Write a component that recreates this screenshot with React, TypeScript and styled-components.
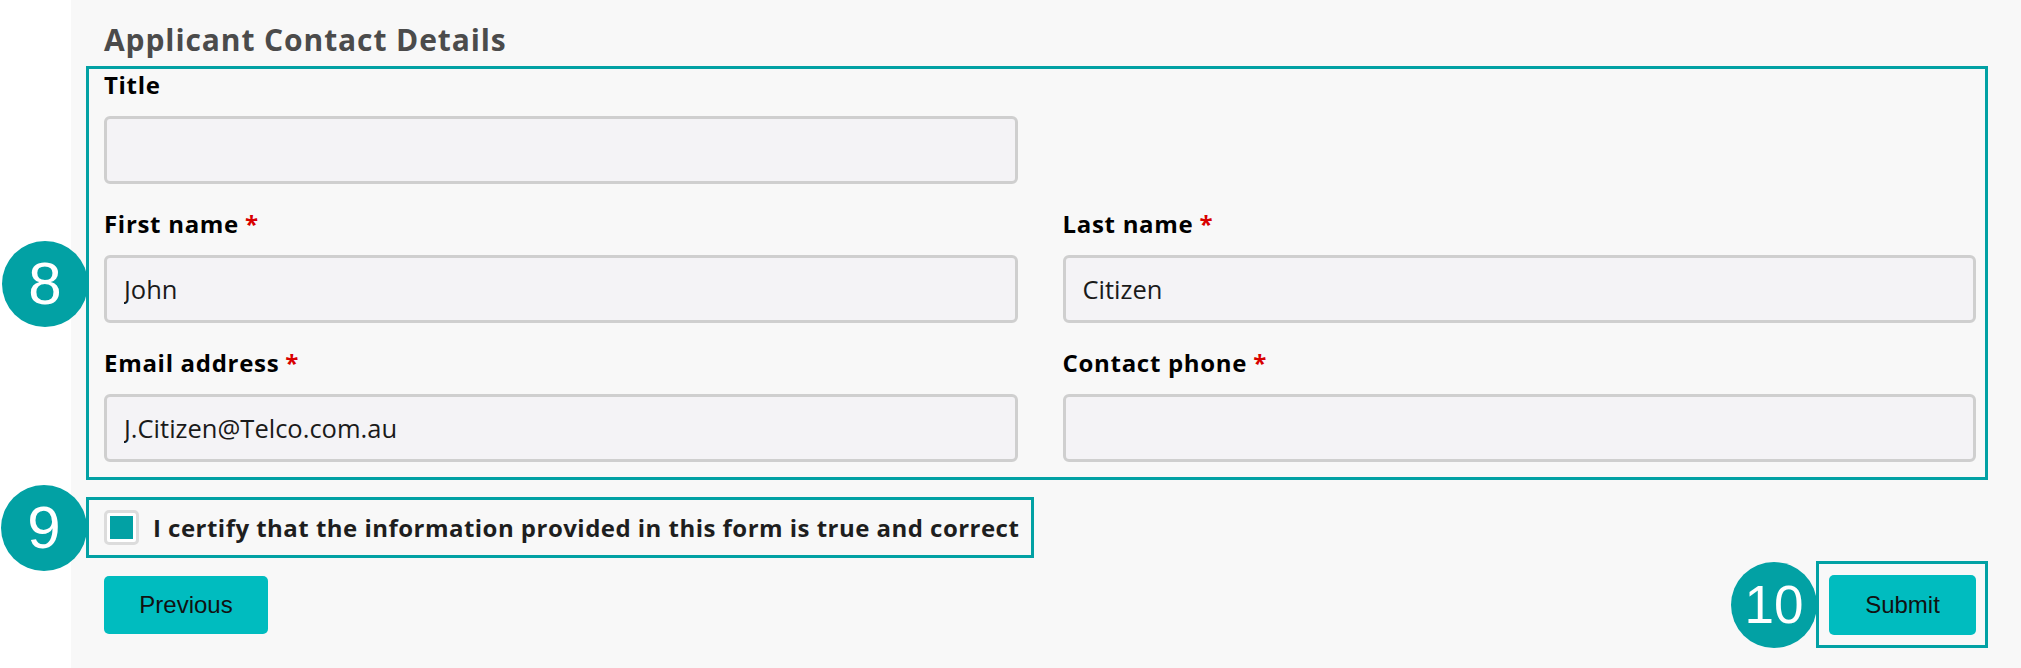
import * as React from 'react';
import styled, { createGlobalStyle } from 'styled-components';

const GlobalStyle = createGlobalStyle`
  html, body {
    margin: 0;
    padding: 0;
    background: #ffffff;
  }
  body {
    font-family: 'Open Sans', 'Liberation Sans', sans-serif;
  }
  * {
    box-sizing: border-box;
  }
`;

const teal = '#02a1a4';

const Page = styled.div`
  display: flex;
  min-height: 100vh;
`;

const Gutter = styled.div`
  width: 71px;
  flex-shrink: 0;
  background: #ffffff;
`;

const Panel = styled.main`
  flex: 1;
  display: flex;
  flex-direction: column;
  align-items: stretch;
  background: #f8f8f8;
  padding: 0 33px 0 15px;
`;

const Heading = styled.h2`
  margin: 0 0 8px 18px;
  padding-top: 22px;
  font-family: 'Open Sans', sans-serif;
  font-weight: 700;
  font-size: 30px;
  line-height: 36px;
  color: #4b4b4b;
  letter-spacing: 0.9px;
`;

// teal outline used by the numbered callouts
const Callout = styled.div`
  position: relative;
  border: 3px solid ${teal};
`;

const FieldsBox = styled(Callout)`
  display: grid;
  grid-template-columns: 1fr 1fr;
  column-gap: 45px;
  row-gap: 24px;
  padding: 0 9px 15px 15px;
`;

const Field = styled.div<{ $full?: boolean }>`
  display: flex;
  flex-direction: column;
  grid-column: ${p => (p.$full ? '1 / 2' : 'auto')};
`;

const Label = styled.label`
  display: block;
  height: 29px;
  margin-bottom: 18px;
  padding-top: 1px;
  font-family: 'Open Sans', sans-serif;
  font-weight: 700;
  font-size: 24px;
  line-height: 29px;
  letter-spacing: 0.7px;
  color: #000;
  white-space: nowrap;
`;

const Req = styled.span`
  color: #d80000;
  margin-left: -1px;
`;

const Input = styled.input`
  height: 68px;
  width: 100%;
  border: 3px solid #cfcfcf;
  border-radius: 6px;
  background: #f4f3f6;
  padding: 0 17px;
  font-family: 'Open Sans', sans-serif;
  font-size: 25.5px;
  color: #1a1a1a;
  outline: none;
`;

const CertifyBox = styled(Callout)`
  align-self: flex-start;
  display: inline-flex;
  align-items: center;
  gap: 14px;
  margin-top: 17px;
  padding: 10px 12px 10px 15px;
`;

const CheckOuter = styled.span`
  width: 35px;
  height: 35px;
  flex-shrink: 0;
  border: 3px solid #dcdcdc;
  border-radius: 5px;
  background: #ffffff;
  padding: 3px;
  display: flex;
`;

const CheckFill = styled.span`
  flex: 1;
  background: ${teal};
`;

const CertifyText = styled.span`
  font-family: 'Open Sans', sans-serif;
  font-weight: 700;
  font-size: 24px;
  line-height: 35px;
  letter-spacing: 0.47px;
  color: #1e1e1e;
  white-space: nowrap;
`;

const Actions = styled.div`
  display: flex;
  justify-content: space-between;
  align-items: center;
  margin-top: 3px;
`;

const Button = styled.button<{ $w: number; $h: number }>`
  width: ${p => p.$w}px;
  height: ${p => p.$h}px;
  border: none;
  border-radius: 5px;
  background: #00bcbf;
  color: #111;
  font-family: 'Liberation Sans', Arial, sans-serif;
  font-size: 24px;
  cursor: pointer;
`;

const PrevWrap = styled.div`
  margin-left: 18px;
`;

const SubmitFrame = styled(Callout)`
  padding: 11px 9px 10px 10px;
`;

const Badge = styled.div<{ $size: number }>`
  position: absolute;
  width: 86px;
  height: 86px;
  border-radius: 50%;
  background: ${teal};
  color: #ffffff;
  display: flex;
  align-items: center;
  justify-content: center;
  font-family: 'Liberation Sans', Arial, sans-serif;
  font-size: ${p => p.$size}px;
  line-height: 1;
  z-index: 2;
`;

const BadgeFields = styled(Badge)`
  left: -87px;
  top: 172px;
`;

const BadgeSide = styled(Badge)`
  left: -88px;
  top: 50%;
  transform: translateY(-50%);
`;

export default function App() {
  return (
    <Page>
      <GlobalStyle />
      <Gutter />
      <Panel>
        <Heading>Applicant Contact Details</Heading>

        <FieldsBox>
          <BadgeFields $size={60}>8</BadgeFields>
          <Field $full>
            <Label>Title</Label>
            <Input readOnly value="" />
          </Field>
          <div />
          <Field>
            <Label>
              First name <Req>*</Req>
            </Label>
            <Input readOnly value="John" />
          </Field>
          <Field>
            <Label>
              Last name <Req>*</Req>
            </Label>
            <Input readOnly value="Citizen" />
          </Field>
          <Field>
            <Label>
              Email address <Req>*</Req>
            </Label>
            <Input readOnly value="J.Citizen@Telco.com.au" />
          </Field>
          <Field>
            <Label>
              Contact phone <Req>*</Req>
            </Label>
            <Input readOnly value="" />
          </Field>
        </FieldsBox>

        <CertifyBox>
          <BadgeSide $size={60}>9</BadgeSide>
          <CheckOuter>
            <CheckFill />
          </CheckOuter>
          <CertifyText>I certify that the information provided in this form is true and correct</CertifyText>
        </CertifyBox>

        <Actions>
          <PrevWrap>
            <Button $w={164} $h={58}>Previous</Button>
          </PrevWrap>
          <SubmitFrame>
            <BadgeSide $size={53}>10</BadgeSide>
            <Button $w={147} $h={60}>Submit</Button>
          </SubmitFrame>
        </Actions>
      </Panel>
    </Page>
  );
}
